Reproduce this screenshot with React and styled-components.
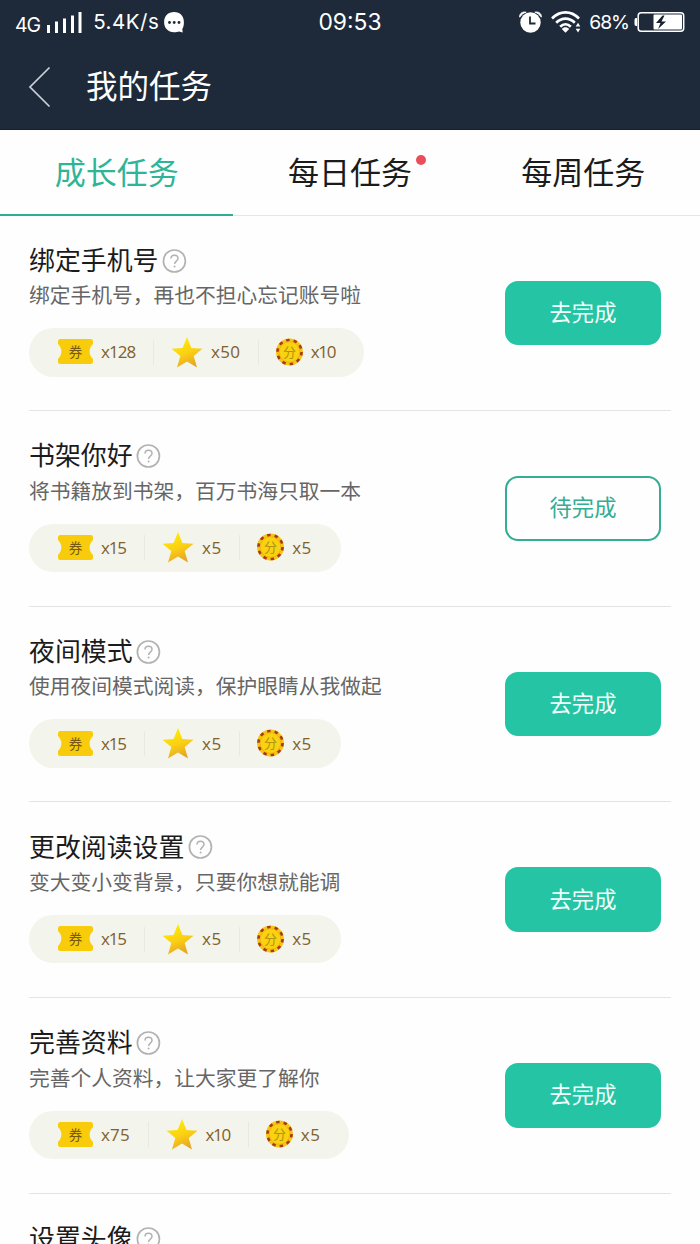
import React from "react";
import styled, { createGlobalStyle } from "styled-components";

const GlobalStyle = createGlobalStyle`
  * { box-sizing: border-box; }
  html, body { margin: 0; height: 1244px; overflow: hidden; background: #fff; }
  body { font-family: "Noto Sans CJK SC", sans-serif; color: #1b1b1b; }
`;

const Screen = styled.div`
  width: 700px;
  height: 1244px;
  overflow: hidden;
  background: #fefefe;
`;

const Header = styled.header`
  height: 130px;
  background: #1e2a39;
  color: #fff;
  border-bottom: 1px solid #172029;
`;

const StatusBar = styled.div`
  display: grid;
  grid-template-columns: 1fr auto 1fr;
  align-items: center;
  height: 44px;
  padding: 0 15px;
  font-family: Inter, "Liberation Sans", sans-serif;
`;

const StatusGroup = styled.div`
  display: flex;
  align-items: center;
  justify-content: ${(p) => (p.$end ? "flex-end" : "flex-start")};
`;

const StatusText = styled.span`
  font-size: ${(p) => p.$size}px;
  line-height: 28px;
  letter-spacing: ${(p) => p.$spacing || 0}px;
  margin: ${(p) => p.$margin || 0};
  white-space: nowrap;
`;

const TitleBar = styled.div`
  display: flex;
  align-items: center;
  height: 85px;
  padding-left: 28px;
`;

const PageTitle = styled.h1`
  margin: 0 0 5px 35px;
  font-size: 31.5px;
  line-height: 42px;
  font-weight: 400;
`;

const Tabs = styled.nav`
  display: grid;
  grid-template-columns: repeat(3, 1fr);
  height: 85.5px;
`;

const Tab = styled.div`
  display: flex;
  justify-content: center;
  align-items: center;
  padding-bottom: ${(p) => (p.$active ? 2 : 3)}px;
  font-size: 31px;
  line-height: 42px;
  border-bottom: ${(p) => (p.$active ? "2px solid #2eae93" : "1px solid #e6e6e6")};
  color: ${(p) => (p.$active ? "#2eb597" : "#1b1b1b")};
`;

const TabLabel = styled.span`
  position: relative;
`;

const Dot = styled.i`
  position: absolute;
  top: 5px;
  right: -14px;
  width: 10px;
  height: 10px;
  border-radius: 50%;
  background: #e94f5b;
`;

const Row = styled.section`
  display: flex;
  justify-content: space-between;
  height: 195.65px;
  margin: 0 29.5px 0 29px;
  padding-right: 9.5px;
  border-bottom: 1.5px solid #e3e4e4;
`;

const Info = styled.div`
  padding-top: 27px;
`;

const TaskTitle = styled.h2`
  display: flex;
  align-items: center;
  gap: 3.3px;
  height: 34px;
  margin: 0;
  font-size: 25.9px;
  line-height: 34px;
  font-weight: 400;
`;

const TitleText = styled.span`
  padding-bottom: 1.5px;
`;

const Description = styled.p`
  margin: 2.5px 0 19px;
  font-size: 20.75px;
  line-height: 30px;
  color: #666;
`;

const Rewards = styled.div`
  display: flex;
  align-items: center;
  width: max-content;
  height: 48.5px;
  padding: 0 11px 0 11.8px;
  border-radius: 25px;
  background: #f3f4ec;
`;

const Reward = styled.div`
  display: flex;
  align-items: center;
  height: 25px;
  padding: 0 17.8px 0 17.3px;
  & + & { padding-left: 17px; border-left: 1px solid #e8e9e2; }
`;

const Amount = styled.span`
  width: ${(p) => p.$width}px;
  margin-left: 7.8px;
  font-family: "Open Sans", sans-serif;
  font-size: 17px;
  line-height: 24px;
  letter-spacing: ${(p) => p.$spacing}px;
  white-space: nowrap;
  color: #80602c;
`;

const Action = styled.button`
  width: 156px;
  height: 64.5px;
  margin-top: 65px;
  padding: 0 0 4px;
  border: 2px solid ${(p) => (p.$outline ? "#35ac94" : "#24c4a4")};
  border-radius: 13px;
  background: ${(p) => (p.$outline ? "#fefefe" : "#24c4a4")};
  color: ${(p) => (p.$outline ? "#35ac94" : "#f0fffb")};
  font-family: inherit;
  font-size: 22.3px;
  line-height: 30px;
`;

const Icon = styled.svg`
  display: block;
  flex: none;
  overflow: visible;
`;

const AlarmIcon = styled(Icon)`
  margin-right: 9.5px;
`;

const IconText = styled.text`
  font-family: "Noto Sans CJK SC", sans-serif;
  text-anchor: middle;
`;

const Signal = () => (
  <Icon width="36" height="21" viewBox="0 0 36 21" fill="#fff">
    <rect x="0" y="13" width="3" height="8" />
    <rect x="8" y="9.5" width="3" height="11.5" />
    <rect x="16" y="6.5" width="3" height="14.5" />
    <rect x="24" y="3.5" width="3" height="17.5" />
    <rect x="31.5" y="0" width="3" height="21" />
  </Icon>
);

const ChatBubble = () => (
  <Icon width="21" height="21" viewBox="0 0 21 21">
    <path d="M10.2 0C4 0 .1 4 .1 10.1S4 20.2 10 20.2c2.300 0 3.700-.1 5.100-.7l3.600 1-.4-3.500c1.300-1.800 1.600-4 1.600-6.900C20 4 16 0 10.200 0Z" fill="#fff" />
    <g fill="#1e2a39">
      <circle cx="5.500" cy="10.500" r="1.400" />
      <circle cx="10.200" cy="10.500" r="1.400" />
      <circle cx="15" cy="10.500" r="1.400" />
    </g>
  </Icon>
);

const AlarmClock = () => (
  <AlarmIcon width="23" height="22" viewBox="0 0 23 22">
    <circle cx="11.500" cy="11.500" r="10.200" fill="#fff" />
    <path d="M.7 6.200C.2 2.500 3.500.2 7.200 1.200 4.500 2 2.300 3.700.7 6.200ZM22.300 6.200C22.800 2.500 19.500.2 15.800 1.200c2.700.8 4.900 2.500 6.500 5Z" fill="#fff" stroke="#fff" strokeWidth=".8" />
    <path d="M11 5.500v7h5.500" fill="none" stroke="#1e2a39" strokeWidth="1.800" />
  </AlarmIcon>
);

const Wifi = () => (
  <Icon width="31" height="22" viewBox="0 0 31 22">
    <g fill="none" stroke="#fff" strokeWidth="2.700">
      <path d="M1 7.500C9-.6 20-.6 28 7.500" />
      <path d="M5.200 11.700c5.500-5.500 13.100-5.500 18.600 0" />
      <path d="M9.200 15.700c3.200-3.200 7.400-3.200 10.600 0" />
    </g>
    <path d="M10.800 18c2-2.300 5.400-2.300 7.400 0l-3.700 3.800ZM24.700 15.500l2.300-3.800 2.300 3.800ZM24.700 17.700l2.300 3.800 2.300-3.800Z" fill="#fff" />
  </Icon>
);

const Battery = () => (
  <Icon width="51" height="22" viewBox="0 0 51 22">
    <path d="M3 7H2Q.5 7 .5 9v4q0 2 1.500 2h1Z" fill="#fff" />
    <rect x="4.200" y="1.700" width="45.500" height="18.600" rx="3" fill="none" stroke="#fff" strokeWidth="1.500" />
    <rect x="19.500" y="3.500" width="28.500" height="15" rx="1" fill="#fff" />
    <path d="m28.500 4.500-6.500 7.500h4.500l-2.500 6 8-7.500h-4.500L30.500 4.500Z" fill="#18222d" />
  </Icon>
);

const Back = () => (
  <Icon width="23" height="42" viewBox="0 0 23 42">
    <path d="M21.500 1.500 2 21l19.500 19.500" fill="none" stroke="#cbd1d7" strokeWidth="1.700" />
  </Icon>
);

const Help = () => (
  <Icon width="24" height="24" viewBox="0 0 24 24">
    <g fill="none" stroke="#b2b2b2">
      <circle cx="12.400" cy="13" r="11" strokeWidth="1.700" />
      <path d="M9 10.500c0-4.300 7-4.300 7 0 0 2.600-3.400 2.700-3.400 5.500" strokeWidth="1.500" />
    </g>
    <circle cx="12.600" cy="18.500" r="1" fill="#b2b2b2" />
  </Icon>
);

const Ticket = () => (
  <Icon width="35" height="26" viewBox="0 0 35 26">
    <path d="M2.500 0h30Q35 0 35 2.500V5c-4.500 4-4.500 11 0 15v2.500q0 2.500-2.500 2.500h-30Q0 25 0 22.500V20c4.500-4 4.500-11 0-15V2.500Q0 0 2.500 0Z" fill="#f9cc0b" />
    <IconText x="17.500" y="17.500" fontSize="13.500" fill="#755811">券</IconText>
  </Icon>
);

const Star = () => (
  <Icon width="32" height="31" viewBox="0 0 32 31">
    <defs>
      <linearGradient id="gold" x1=".2" y1="0" x2=".6" y2="1">
        <stop offset="0" stopColor="#fff000" />
        <stop offset=".55" stopColor="#fbd014" />
        <stop offset="1" stopColor="#e5a326" />
      </linearGradient>
    </defs>
    <path d="m16 0 4.400 11L31.500 11.700l-8.800 7.300L26 30.500l-10-6-10 6L9.300 19 .5 11.700 11.600 11Z" fill="url(#gold)" />
  </Icon>
);

const Coin = () => (
  <Icon width="27" height="27" viewBox="0 0 27 27">
    <circle cx="13.500" cy="13" r="13.500" fill="#f6c514" />
    <circle cx="13.500" cy="13" r="12" fill="none" stroke="#a93c18" strokeWidth="2.700" strokeDasharray="3.500 4.040" />
    <circle cx="13.500" cy="13" r="10.300" fill="#fad20f" stroke="#e7ad17" strokeWidth=".7" />
    <IconText x="13.500" y="17.800" fontSize="13" fill="#b19416">分</IconText>
  </Icon>
);

const amountStyles = {
  x128: [34.5, -0.9],
  x15: [25.5, -1.1],
  x75: [29, 0.2],
  x50: [29.2, 0.3],
  x10: [24.7, -1.3],
  x5: [19.6, 0.5],
};

const rewardIcons = [Ticket, Star, Coin];

const tasks = [
  { title: "绑定手机号", text: "绑定手机号，再也不担心忘记账号啦", amounts: ["x128", "x50", "x10"] },
  { title: "书架你好", text: "将书籍放到书架，百万书海只取一本", amounts: ["x15", "x5", "x5"], pending: true },
  { title: "夜间模式", text: "使用夜间模式阅读，保护眼睛从我做起", amounts: ["x15", "x5", "x5"] },
  { title: "更改阅读设置", text: "变大变小变背景，只要你想就能调", amounts: ["x15", "x5", "x5"] },
  { title: "完善资料", text: "完善个人资料，让大家更了解你", amounts: ["x75", "x10", "x5"] },
];

function Task({ task }) {
  return (
    <Row>
      <Info>
        <TaskTitle><TitleText>{task.title}</TitleText><Help /></TaskTitle>
        <Description>{task.text}</Description>
        <Rewards>
          {task.amounts.map((amount, i) => {
            const RewardIcon = rewardIcons[i];
            const [width, spacing] = amountStyles[amount];
            return (
              <Reward key={i}>
                <RewardIcon />
                <Amount $width={width} $spacing={spacing}>{amount}</Amount>
              </Reward>
            );
          })}
        </Rewards>
      </Info>
      <Action $outline={task.pending}>{task.pending ? "待完成" : "去完成"}</Action>
    </Row>
  );
}

export default function App() {
  return (
    <Screen>
      <GlobalStyle />
      <Header>
        <StatusBar>
          <StatusGroup>
            <StatusText $size={19.5} $spacing={-1} $margin="5px 7px 0 0">4G</StatusText>
            <Signal />
            <StatusText $size={20.5} $spacing={0.5} $margin="0 4.5px 0 10px">5.4K/s</StatusText>
            <ChatBubble />
          </StatusGroup>
          <StatusText $size={22.8}>09:53</StatusText>
          <StatusGroup $end>
            <AlarmClock />
            <Wifi />
            <StatusText $size={19.3} $spacing={-1} $margin="0 5px 0 7px">68%</StatusText>
            <Battery />
          </StatusGroup>
        </StatusBar>
        <TitleBar>
          <Back />
          <PageTitle>我的任务</PageTitle>
        </TitleBar>
      </Header>
      <Tabs>
        <Tab $active><TabLabel>成长任务</TabLabel></Tab>
        <Tab><TabLabel>每日任务<Dot /></TabLabel></Tab>
        <Tab><TabLabel>每周任务</TabLabel></Tab>
      </Tabs>
      {tasks.map((task) => <Task key={task.title} task={task} />)}
      <Row>
        <Info><TaskTitle><TitleText>设置头像</TitleText><Help /></TaskTitle></Info>
      </Row>
    </Screen>
  );
}
